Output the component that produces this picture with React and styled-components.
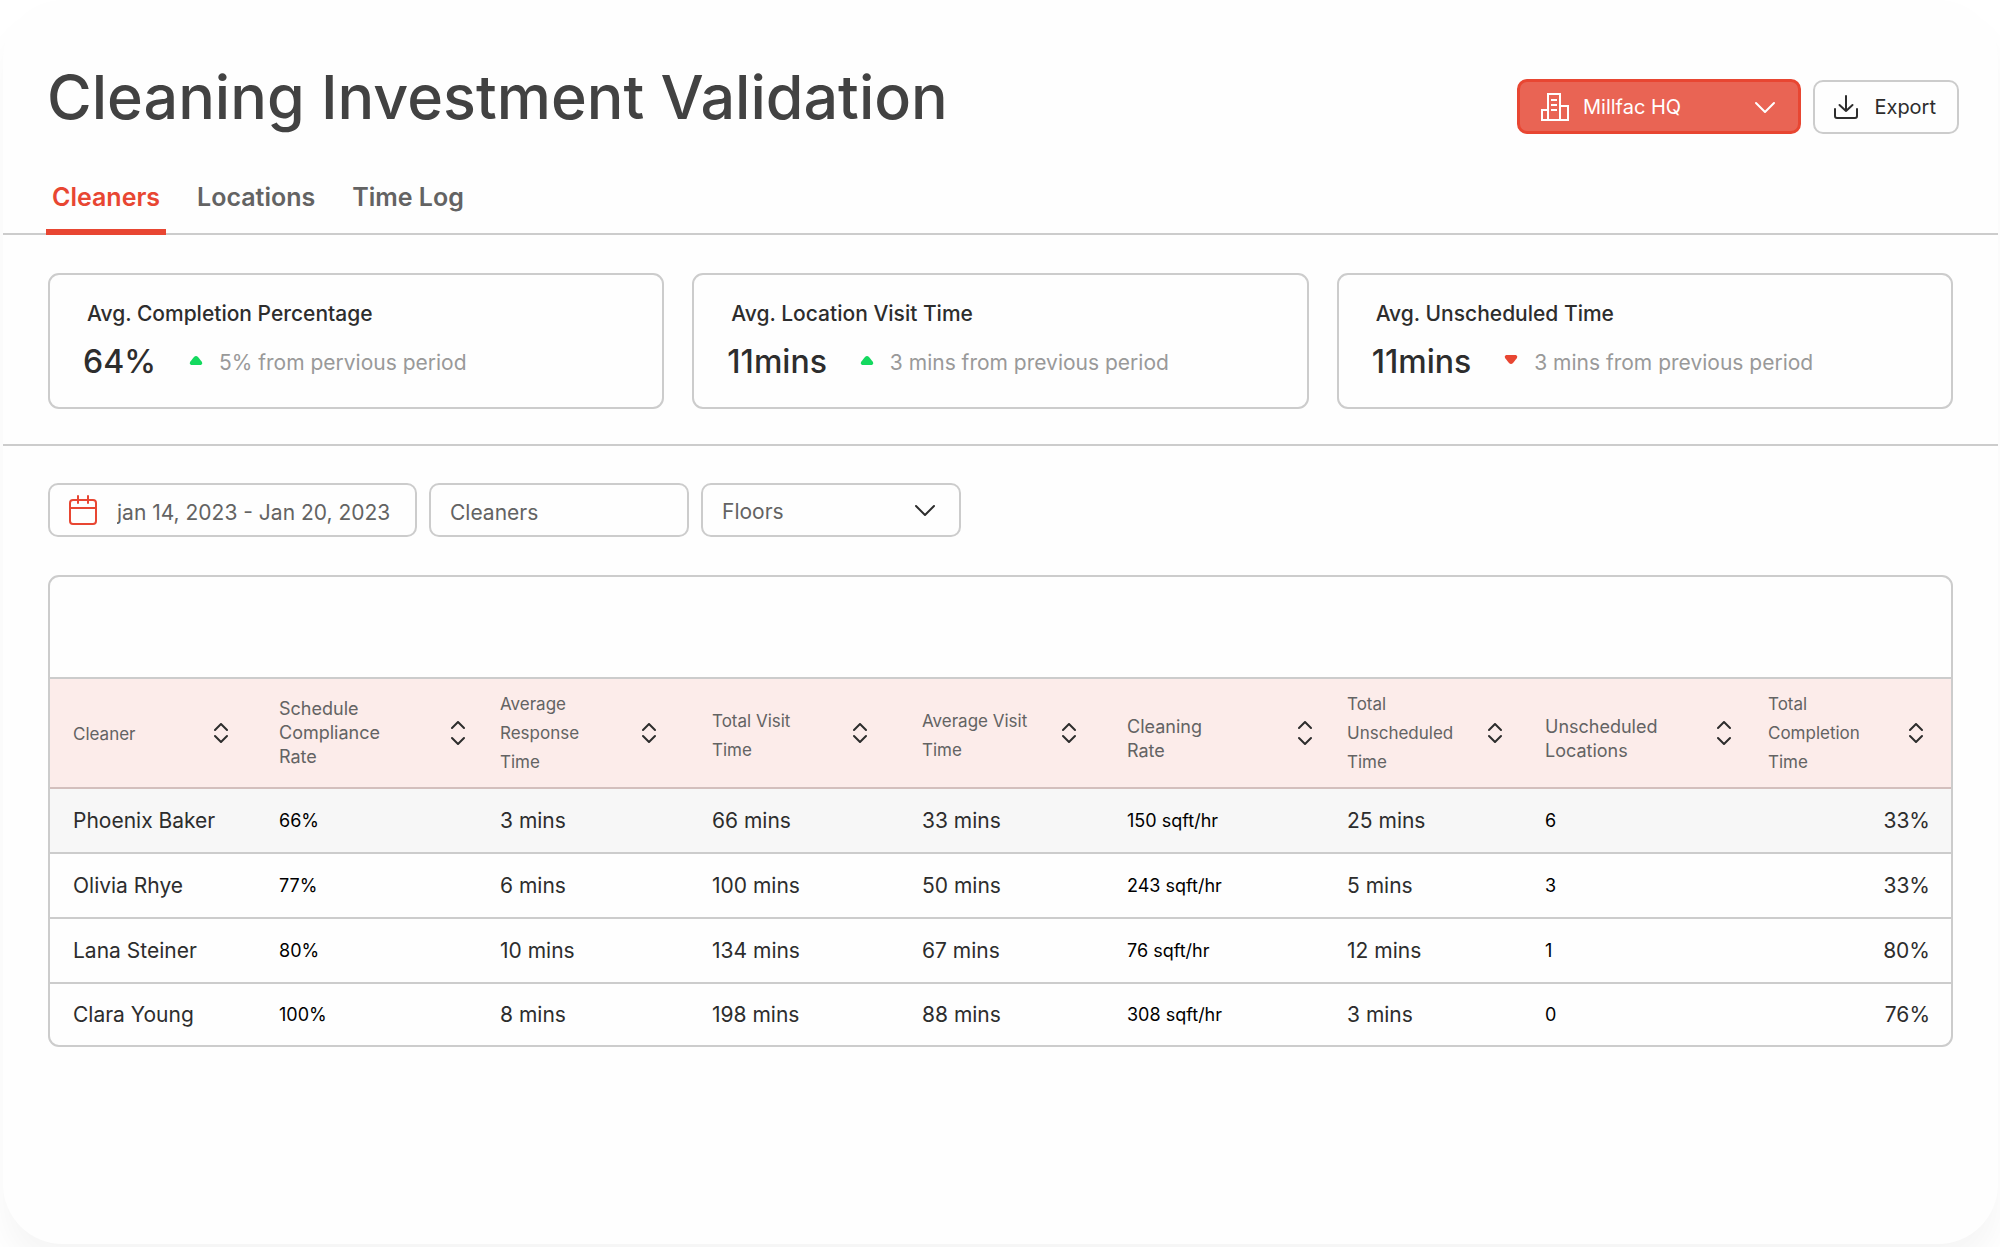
import React, { useState } from "react";
import styled, { createGlobalStyle } from "styled-components";

const GlobalStyle = createGlobalStyle`
  :root {
    --color-accent: #e84632;
    --color-accent-light: #e96454;
    --color-blush: #fcecea;
    --color-line: #cccccc;
    --color-title: #424242;
    --color-text: #2d2d2d;
    --color-gray: #636363;
    --color-muted: #999999;
  }

  * {
    box-sizing: border-box;
  }

  body {
    margin: 0;
    background: #fff;
    color: var(--color-text);
    font-family: Inter, "Liberation Sans", sans-serif;
    overflow-x: hidden;
  }

  button, input, select {
    font-family: inherit;
  }
`;

const Panel = styled.div`
  min-height: calc(100vh - 3px);
  margin: 0 2px 3px 3px;
  background: #fefefe;
  border-radius: 60px;
  box-shadow: 0 24px 32px rgba(0, 0, 0, 0.04);
`;

const Header = styled.header`
  display: flex;
  justify-content: space-between;
  align-items: flex-start;
  padding: 60px 39px 0 44px;
`;

const Title = styled.h1`
  margin: 0;
  font-size: 61px;
  line-height: 74px;
  font-weight: 500;
  color: var(--color-title);
`;

const Actions = styled.div`
  display: flex;
  align-items: center;
  gap: 12px;
  padding-top: 19px;
`;

const SelectBox = styled.div`
  position: relative;
  width: ${({ $width }) => $width}px;

  svg {
    position: absolute;
    top: 50%;
    transform: translateY(-50%);
    pointer-events: none;
  }

  svg.building {
    left: 24px;
  }

  svg.chevron {
    right: 25px;
  }
`;

const Select = styled.select`
  appearance: none;
  display: block;
  width: 100%;
  height: 54px;
  padding: 2px 56px 0 19px;
  border: 2px solid var(--color-line);
  border-radius: 10px;
  background: transparent;
  color: var(--color-gray);
  font-size: 21px;
`;

const PrimarySelect = styled(Select)`
  height: 55px;
  padding: 0 56px 0 63px;
  border: 3px solid var(--color-accent);
  background: var(--color-accent-light);
  color: #fff;
  font-size: 20px;
`;

const ExportButton = styled.button`
  display: flex;
  align-items: center;
  justify-content: space-between;
  width: 146px;
  height: 54px;
  padding: 0 21px 0 19px;
  border: 2px solid var(--color-line);
  border-radius: 10px;
  background: transparent;
  color: var(--color-text);
  font-size: 20px;
  cursor: pointer;
`;

const Tabs = styled.nav`
  display: flex;
  gap: 25px;
  margin-top: 37px;
  padding-left: 43px;
  border-bottom: 2px solid var(--color-line);
`;

const Tab = styled.button`
  margin-bottom: -2px;
  padding: 12px 6px 18px;
  border: 0;
  border-bottom: 6px solid ${({ $active }) => ($active ? "var(--color-accent)" : "transparent")};
  background: none;
  color: ${({ $active }) => ($active ? "var(--color-accent)" : "var(--color-gray)")};
  font-size: 25px;
  line-height: 28px;
  font-weight: 600;
  cursor: pointer;
`;

const Cards = styled.section`
  display: grid;
  grid-template-columns: repeat(3, 1fr);
  gap: 28px;
  padding: 38px 45px 35px;
  border-bottom: 2px solid var(--color-line);
`;

const Card = styled.article`
  height: 136px;
  padding: 25px 33px;
  border: 2px solid var(--color-line);
  border-radius: 11px;
`;

const CardLabel = styled.h2`
  margin: 0 0 12px 4px;
  font-size: 21px;
  line-height: 28px;
  font-weight: 500;
`;

const CardRow = styled.div`
  display: flex;
  align-items: center;
`;

const CardValue = styled.strong`
  font-size: 32px;
  line-height: 44px;
  font-weight: 500;
`;

const Trend = styled.svg`
  margin: 0 16px 4px 33px;
`;

const CardNote = styled.span`
  font-size: 21px;
  color: var(--color-muted);
`;

const Filters = styled.form`
  display: flex;
  gap: 12px;
  padding: 37px 45px 38px;
`;

const Field = styled.label`
  display: flex;
  align-items: center;
  gap: 20px;
  width: ${({ $width }) => $width}px;
  height: 54px;
  padding: 0 19px;
  border: 2px solid var(--color-line);
  border-radius: 10px;

  svg {
    flex: none;
  }

  input {
    flex: 1;
    min-width: 0;
    padding: 4px 0 0;
    border: 0;
    outline: 0;
    background: none;
    color: var(--color-gray);
    font-size: 21px;
  }

  input::placeholder {
    color: var(--color-gray);
    opacity: 1;
  }
`;

const TableBox = styled.section`
  margin: 0 45px;
  padding-top: 100px;
  border: 2px solid var(--color-line);
  border-radius: 11px;
  overflow: hidden;
`;

const Table = styled.table`
  width: 100%;
  table-layout: fixed;
  border-collapse: collapse;

  thead tr {
    height: 110px;
    background: var(--color-blush);
    border-top: 2px solid var(--color-line);
    border-bottom: 2px solid #d3bfbd;
  }

  tbody tr {
    height: 65px;
    border-bottom: 2px solid var(--color-line);
  }

  tbody tr:first-child {
    background: #f7f7f7;
  }

  tbody tr:last-child {
    height: 62px;
    border-bottom: 0;
  }
`;

const HeadCell = styled.th`
  padding: 0 ${({ $end }) => $end}px 0 23px;
  text-align: left;
  font-size: ${({ $plain }) => ($plain ? 18 : 17)}px;
  line-height: ${({ $plain }) => ($plain ? 24 : 29)}px;
  font-weight: 400;
  color: var(--color-gray);

  div {
    display: flex;
    align-items: center;
    justify-content: space-between;
  }

  span {
    width: ${({ $text }) => $text}px;
    padding-top: ${({ $drop }) => $drop || 0}px;
  }
`;

const SortButton = styled.button`
  display: flex;
  padding: 0;
  border: 0;
  background: none;
  color: var(--color-text);
  cursor: pointer;
`;

const Cell = styled.td`
  padding: 0 21px 0 23px;
  text-align: ${({ $right }) => ($right ? "right" : "left")};
  font-size: ${({ $plain }) => ($plain ? 18 : 21)}px;
  color: ${({ $plain }) => ($plain ? "#000" : "var(--color-text)")};
`;

const BuildingIcon = () => (
  <svg className="building" width="28" height="28" viewBox="0 0 28 28" fill="none" stroke="#fff" strokeWidth="2" aria-hidden="true">
    <path d="M7 27V1h12v26M1 27V17h6M19 13h8v14M0 27h28" />
    <path d="M10 7h6M10 12h6M10 17h6" />
  </svg>
);

const ChevronIcon = ({ color }) => (
  <svg className="chevron" width="22" height="14" viewBox="0 0 22 14" fill="none" stroke={color} strokeWidth="2" strokeLinecap="round" strokeLinejoin="round" aria-hidden="true">
    <path d="M2 3l9 9 9-9" />
  </svg>
);

const DownloadIcon = () => (
  <svg width="24" height="24" viewBox="0 0 24 24" fill="none" stroke="currentColor" strokeWidth="2" strokeLinecap="round" strokeLinejoin="round" aria-hidden="true">
    <path d="M12 1v15M5.500 10l6.500 6 6.500-6M1 14v7a2 2 0 0 0 2 2h18a2 2 0 0 0 2-2v-7" />
  </svg>
);

const CalendarIcon = () => (
  <svg width="28" height="30" viewBox="0 0 28 30" fill="none" stroke="#e84632" strokeWidth="2" strokeLinecap="round" aria-hidden="true">
    <rect x="1" y="5" width="26" height="24" rx="3" />
    <path d="M1 13h26M9 1v7M19 1v7" />
  </svg>
);

const SortIcon = ({ tall }) => (
  <svg width="14" height={tall ? 24 : 20} viewBox={tall ? "0 0 14 24" : "0 0 14 20"} fill="none" stroke="currentColor" strokeWidth="2" strokeLinecap="round" strokeLinejoin="round" aria-hidden="true">
    <path d={tall ? "M1 7l6-6 6 6M1 17l6 6 6-6" : "M1 7l6-6 6 6M1 13l6 6 6-6"} />
  </svg>
);

const TrendIcon = ({ down }) => (
  <Trend width="14" height="10" viewBox="0 0 14 10" aria-hidden="true">
    {down ? (
      <path d="M2 0h10q2 1 1 3L9 8q-2 2-4 0L1 3Q0 1 2 0z" fill="#e84632" />
    ) : (
      <path d="M2 10h10q2-1 1-3L9 2Q7 0 5 2L1 7q-1 2 1 3z" fill="#14d95f" />
    )}
  </Trend>
);

const tabs = ["Cleaners", "Locations", "Time Log"];

const cards = [
  { label: "Avg. Completion Percentage", value: "64%", note: "5% from pervious period" },
  { label: "Avg. Location Visit Time", value: "11mins", note: "3 mins from previous period" },
  { label: "Avg. Unscheduled Time", value: "11mins", note: "3 mins from previous period", down: true },
];

const columns = [
  { name: "Cleaner", width: 206, text: 80, end: 28, drop: 3 },
  { name: "Schedule Compliance Rate", width: 221, text: 110, end: 12, plain: true },
  { name: "Average Response Time", width: 212, text: 90, end: 33 },
  { name: "Total Visit Time", width: 210, text: 90, end: 32, drop: 6 },
  { name: "Average Visit Time", width: 205, text: 116, end: 28, drop: 6 },
  { name: "Cleaning Rate", width: 220, text: 90, end: 12, plain: true, drop: 12 },
  { name: "Total Unscheduled Time", width: 198, text: 116, end: 20 },
  { name: "Unscheduled Locations", width: 223, text: 130, end: 14, plain: true, drop: 12 },
  { name: "Total Completion Time", width: 206, text: 100, end: 28 },
];

const rows = [
  ["Phoenix Baker", "66%", "3 mins", "66 mins", "33 mins", "150 sqft/hr", "25 mins", "6", "33%"],
  ["Olivia Rhye", "77%", "6 mins", "100 mins", "50 mins", "243 sqft/hr", "5 mins", "3", "33%"],
  ["Lana Steiner", "80%", "10 mins", "134 mins", "67 mins", "76 sqft/hr", "12 mins", "1", "80%"],
  ["Clara Young", "100%", "8 mins", "198 mins", "88 mins", "308 sqft/hr", "3 mins", "0", "76%"],
];

export default function App() {
  const [activeTab, setActiveTab] = useState("Cleaners");

  return (
    <>
      <GlobalStyle />
      <Panel>
        <Header>
          <Title>Cleaning Investment Validation</Title>
          <Actions>
            <SelectBox $width={284}>
              <PrimarySelect aria-label="Building">
                <option>Millfac HQ</option>
              </PrimarySelect>
              <BuildingIcon />
              <ChevronIcon color="#fff" />
            </SelectBox>
            <ExportButton type="button">
              <DownloadIcon />
              Export
            </ExportButton>
          </Actions>
        </Header>

        <Tabs>
          {tabs.map((tab) => (
            <Tab key={tab} type="button" $active={tab === activeTab} onClick={() => setActiveTab(tab)}>
              {tab}
            </Tab>
          ))}
        </Tabs>

        <Cards>
          {cards.map((card) => (
            <Card key={card.label}>
              <CardLabel>{card.label}</CardLabel>
              <CardRow>
                <CardValue>{card.value}</CardValue>
                <TrendIcon down={card.down} />
                <CardNote>{card.note}</CardNote>
              </CardRow>
            </Card>
          ))}
        </Cards>

        <Filters>
          <Field $width={369}>
            <CalendarIcon />
            <input type="text" aria-label="Date range" defaultValue="jan 14, 2023 - Jan 20, 2023" />
          </Field>
          <Field $width={260}>
            <input type="text" aria-label="Cleaners" placeholder="Cleaners" />
          </Field>
          <SelectBox $width={260}>
            <Select aria-label="Floors">
              <option>Floors</option>
            </Select>
            <ChevronIcon color="#2d2d2d" />
          </SelectBox>
        </Filters>

        <TableBox>
          <Table>
            <colgroup>
              {columns.map((column) => (
                <col key={column.name} width={column.width} />
              ))}
            </colgroup>
            <thead>
              <tr>
                {columns.map((column) => (
                  <HeadCell
                    key={column.name}
                    scope="col"
                    $plain={column.plain}
                    $text={column.text}
                    $end={column.end}
                    $drop={column.drop}
                  >
                    <div>
                      <span>{column.name}</span>
                      <SortButton type="button" aria-label={`Sort by ${column.name}`}>
                        <SortIcon tall={column.plain} />
                      </SortButton>
                    </div>
                  </HeadCell>
                ))}
              </tr>
            </thead>
            <tbody>
              {rows.map((row) => (
                <tr key={row[0]}>
                  {row.map((value, i) => (
                    <Cell key={columns[i].name} $plain={columns[i].plain} $right={i === row.length - 1}>
                      {value}
                    </Cell>
                  ))}
                </tr>
              ))}
            </tbody>
          </Table>
        </TableBox>
      </Panel>
    </>
  );
}
